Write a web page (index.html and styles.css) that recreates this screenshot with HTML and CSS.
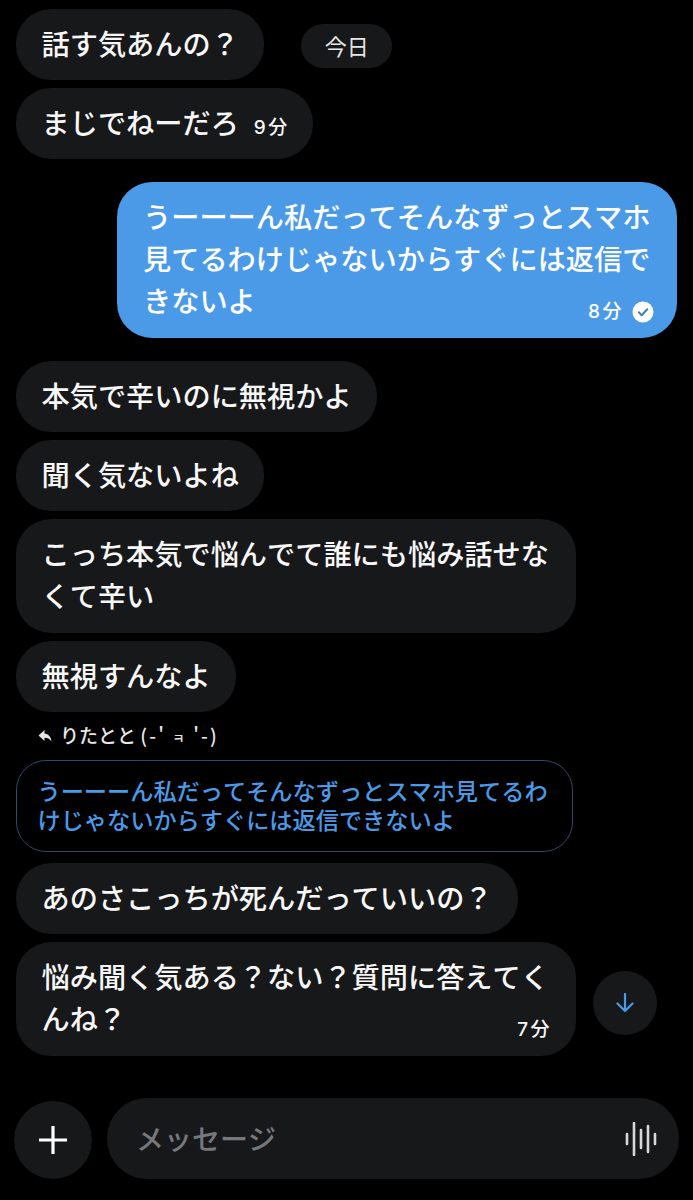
FILE: index.html
```html
<!DOCTYPE html>
<html lang="ja">
<head>
<meta charset="utf-8">
<title>チャット</title>
<link rel="stylesheet" href="styles.css">
</head>
<body>
<main class="chat">
  <div class="row row-date">
    <div class="bubble">話す気あんの？</div>
    <div class="date-chip">今日</div>
  </div>
  <div class="bubble bubble-inline">まじでねーだろ<span class="time">9分</span></div>

  <div class="bubble bubble-mine">うーーーん私だってそんなずっとスマホ<br>見てるわけじゃないからすぐには返信で<br>きないよ
    <div class="meta">
      <span class="time">8分</span>
      <svg class="check" viewBox="0 0 22 22" aria-hidden="true">
        <circle cx="11" cy="11" r="10.5" fill="#fff"/>
        <path d="M6.8 11.3l2.9 2.9 5.5-6" fill="none" stroke="#3f7fbd" stroke-width="2" stroke-linecap="round" stroke-linejoin="round"/>
      </svg>
    </div>
  </div>

  <div class="bubble">本気で辛いのに無視かよ</div>
  <div class="bubble">聞く気ないよね</div>
  <div class="bubble bubble-wide">こっち本気で悩んでて誰にも悩み話せな<br>くて辛い</div>
  <div class="bubble">無視すんなよ</div>

  <div class="reply-label">
    <svg class="reply-icon" viewBox="0 0 14 14" aria-hidden="true">
      <path d="M6.5 1L.5 6.500l6 5.500V8.800c3 0 5 .9 7 3.700-.3-4.600-3-7.700-7-8.100z" fill="#e6e6e6"/>
    </svg>
    <span>りたとと <span class="kaomoji">(-' <span class="kao">ㅋ</span> '-)</span></span>
  </div>
  <div class="quote">うーーーん私だってそんなずっとスマホ見てるわ<br>けじゃないからすぐには返信できないよ</div>

  <div class="bubble bubble-after-quote">あのさこっちが死んだっていいの？</div>
  <div class="row row-last">
    <div class="bubble bubble-wide">悩み聞く気ある？ない？質問に答えてく<br>んね？
      <div class="meta meta-dark"><span class="time">7分</span></div>
    </div>
    <div class="scroll-down">
      <svg class="arrow" viewBox="0 0 18 20" aria-hidden="true">
        <path d="M9 1v17M1.500 10.500L9 18l7.500-7.500" fill="none" stroke="#4a9ae8" stroke-width="2.200" stroke-linecap="round" stroke-linejoin="round"/>
      </svg>
    </div>
  </div>
</main>

<footer class="composer">
  <div class="plus">
    <svg class="plus-icon" viewBox="0 0 30 30" aria-hidden="true">
      <path d="M15 1v28M1 15h28" stroke="#fff" stroke-width="3.200" fill="none"/>
    </svg>
  </div>
  <div class="input">
    <span class="placeholder">メッセージ</span>
    <svg class="wave" viewBox="0 0 32 34" aria-hidden="true">
      <path d="M2 12v10M9 1v32M16 8v18M23 4v26M30 12v10" stroke="#d8d8d8" stroke-width="2.600" fill="none" stroke-linecap="round"/>
    </svg>
  </div>
</footer>
</body>
</html>
```

FILE: styles.css
```css
* {
  box-sizing: border-box;
}

html,
body {
  margin: 0;
  padding: 0;
  background: #000;
}

body {
  width: 693px;
  height: 1200px;
  overflow: hidden;
  color: #f7f7f7;
  font-family: "Noto Sans CJK JP", "Noto Sans", sans-serif;
  font-kerning: none;
  font-weight: 500;
}

.chat {
  display: flex;
  flex-direction: column;
  align-items: flex-start;
  gap: 8px;
  height: 1098px;
  padding: 9px 16px 0;
}

.row {
  display: flex;
  align-items: center;
}

.row-date {
  gap: 37px;
}

.bubble {
  position: relative;
  flex: none;
  padding: 13px 25.500px 16px;
  border-radius: 35px;
  background: #17181a;
  font-size: 28.200px;
  line-height: 42px;
  white-space: nowrap;
}

.bubble-inline {
  display: flex;
  align-items: center;
  padding-right: 23px;
}

.bubble-inline .time {
  margin: 12px 0 0 15px;
}

.bubble-wide {
  width: 560px;
  padding-bottom: 17px;
}

.bubble-mine {
  align-self: flex-end;
  width: 560px;
  height: 156px;
  margin: 15px 0;
  padding-left: 26px;
  background: #4a9ae8;
  color: #fff;
}

.date-chip {
  display: flex;
  align-items: center;
  justify-content: center;
  width: 91px;
  height: 44px;
  margin-top: 3px;
  padding-bottom: 3px;
  border-radius: 22px;
  background: #17181a;
  color: #e6e6e6;
  font-size: 22px;
  font-weight: 400;
}

.time {
  font-family: Inter, "Noto Sans CJK JP", sans-serif;
  font-size: 19px;
  line-height: 24px;
  letter-spacing: 2.500px;
}

.meta {
  position: absolute;
  right: 23px;
  bottom: 14px;
  display: flex;
  align-items: center;
  gap: 8px;
}

.meta-dark {
  right: 24px;
  bottom: 14px;
}

.check {
  width: 22px;
  height: 22px;
}

.reply-label {
  display: flex;
  align-items: center;
  gap: 8px;
  height: 32px;
  margin-left: 22px;
  color: #e6e6e6;
  font-size: 19px;
  font-weight: 500;
  line-height: 32px;
}

.reply-icon {
  width: 14px;
  height: 14px;
}

.kaomoji {
  letter-spacing: 2.200px;
}

.kao {
  font-size: 13px;
}

.quote {
  width: 557px;
  height: 92px;
  padding: 15px 20.500px;
  border: 1px solid #2c4a6e;
  border-radius: 30px;
  color: #4a9ae8;
  font-size: 23.200px;
  line-height: 29px;
  white-space: nowrap;
}

.bubble-after-quote {
  margin-top: 3px;
}

.row-last {
  gap: 17px;
}

.scroll-down {
  display: flex;
  align-items: center;
  justify-content: center;
  width: 64px;
  height: 64px;
  margin-top: 8px;
  border-radius: 50%;
  background: #17181a;
}

.arrow {
  width: 18px;
  height: 20px;
}

.composer {
  display: flex;
  align-items: flex-end;
  gap: 15px;
  height: 81px;
  padding: 0 14px;
}

.plus {
  display: flex;
  align-items: center;
  justify-content: center;
  flex: none;
  width: 78px;
  height: 78px;
  border-radius: 50%;
  background: #17181a;
}

.plus-icon {
  width: 30px;
  height: 30px;
}

.input {
  display: flex;
  align-items: center;
  justify-content: space-between;
  flex: none;
  width: 572px;
  height: 81px;
  padding: 0 22px 0 29px;
  border-radius: 40px;
  background: #17181a;
}

.placeholder {
  margin-bottom: 2px;
  color: #77787c;
  font-size: 28px;
  font-weight: 500;
  line-height: 42px;
}

.wave {
  width: 32px;
  height: 34px;
}
```
